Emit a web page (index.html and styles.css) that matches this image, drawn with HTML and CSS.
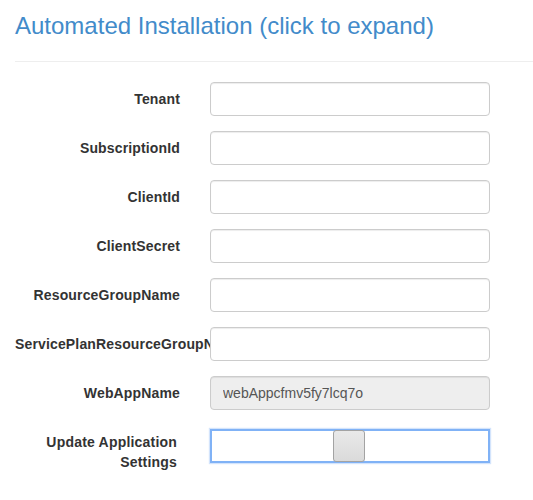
FILE: index.html
```html
<!DOCTYPE html>
<html>
<head>
<meta charset="utf-8">
<link rel="stylesheet" href="styles.css">
</head>
<body>
<div class="page">
  <h3 class="title">Automated Installation (click to expand)</h3>
  <hr class="rule">
  <form class="form">
    <div class="row"><label class="label">Tenant</label><input class="control" type="text"></div>
    <div class="row"><label class="label">SubscriptionId</label><input class="control" type="text"></div>
    <div class="row"><label class="label">ClientId</label><input class="control" type="text"></div>
    <div class="row"><label class="label">ClientSecret</label><input class="control" type="text"></div>
    <div class="row"><label class="label">ResourceGroupName</label><input class="control" type="text"></div>
    <div class="row"><label class="label">ServicePlanResourceGroupName</label><input class="control" type="text"></div>
    <div class="row"><label class="label">WebAppName</label><input class="control disabled" type="text" value="webAppcfmv5fy7lcq7o" disabled></div>
    <div class="row"><label class="label wrap">Update Application Settings</label><div class="slider"><div class="thumb"></div></div></div>
  </form>
</div>
</body>
</html>
```
FILE: styles.css
```css
html, body {
  margin: 0;
  padding: 0;
  background: #fff;
}
body {
  font-family: "Liberation Sans", Arial, sans-serif;
  font-size: 14px;
  color: #333;
}
.page {
  padding-left: 15px;
}
.title {
  margin: 13px 0 0;
  font-size: 24px;
  line-height: 26px;
  font-weight: normal;
  color: #428bca;
}
.rule {
  margin: 22px 0 20px;
  border: 0;
  border-top: 1px solid #eee;
  height: 0;
}
.form {
  margin: 0;
}
.row {
  display: grid;
  grid-template-columns: 165px 280px;
  column-gap: 30px;
  margin-bottom: 15px;
  align-items: start;
}
.label {
  padding-top: 7px;
  line-height: 20px;
  font-weight: bold;
  font-size: 14px;
  letter-spacing: 0.15px;
  text-align: right;
  white-space: nowrap;
  color: #333;
}
.label.wrap {
  white-space: normal;
  padding-left: 30px;
  padding-right: 3px;
  letter-spacing: 0.2px;
}
.control {
  z-index: 1;
  box-sizing: border-box;
  width: 280px;
  height: 34px;
  margin: 0;
  padding: 6px 12px;
  font-family: "Liberation Sans", Arial, sans-serif;
  font-size: 14px;
  line-height: 20px;
  color: #555;
  background: #fff;
  border: 1px solid #ccc;
  border-radius: 4px;
  box-shadow: inset 0 1px 1px rgba(0,0,0,.075);
}
.control.disabled {
  background: #eee;
  color: #555;
  -webkit-text-fill-color: #555;
  opacity: 1;
}
.slider {
  z-index: 1;
  box-sizing: border-box;
  width: 280px;
  height: 34px;
  margin-top: 4px;
  border: 2px solid #80b2f6;
  box-shadow: 0 0 1px 1px rgba(128,178,246,.35);
  background: #fff;
  display: flex;
  align-items: center;
  justify-content: center;
}
.thumb {
  box-sizing: border-box;
  width: 32px;
  height: 32px;
  margin-right: 2px;
  border: 1px solid #a3a3a3;
  border-radius: 3px;
  background: linear-gradient(#e9e9e9, #dadada);
}
```
